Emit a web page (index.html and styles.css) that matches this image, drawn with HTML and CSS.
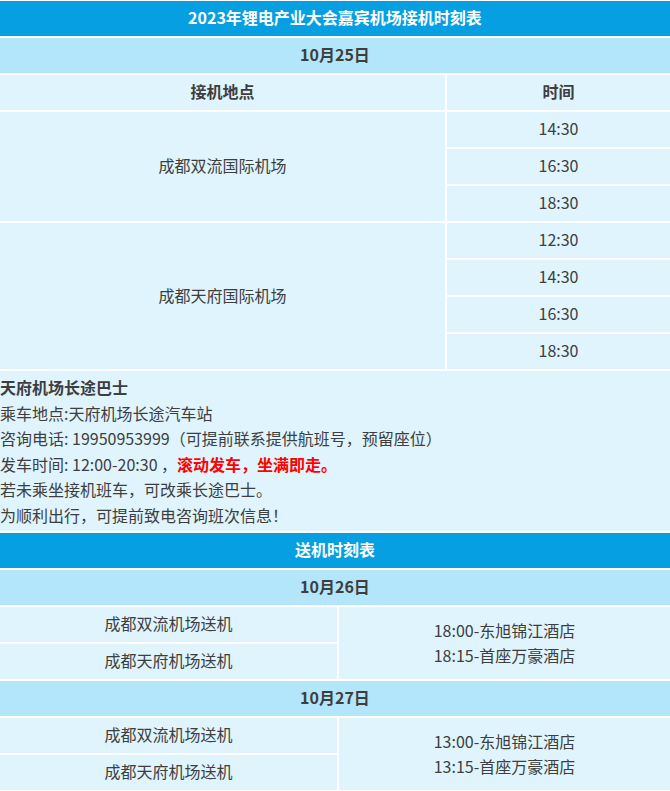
FILE: index.html
```html
<!DOCTYPE html>
<html lang="zh-CN">
<head>
<meta charset="utf-8">
<title>2023年锂电产业大会嘉宾机场接机时刻表</title>
<link rel="stylesheet" href="styles.css">
</head>
<body>
<div class="page">
  <div class="bar title">2023年锂电产业大会嘉宾机场接机时刻表</div>
  <div class="bar date">10月25日</div>
  <div class="grid pickup">
    <div class="cell head">接机地点</div>
    <div class="cell head">时间</div>
    <div class="cell place span3">成都双流国际机场</div>
    <div class="cell">14:30</div>
    <div class="cell">16:30</div>
    <div class="cell">18:30</div>
    <div class="cell place span4">成都天府国际机场</div>
    <div class="cell">12:30</div>
    <div class="cell">14:30</div>
    <div class="cell">16:30</div>
    <div class="cell">18:30</div>
  </div>
  <div class="info">
    <p class="strong">天府机场长途巴士</p>
    <p>乘车地点:天府机场长途汽车站</p>
    <p>咨询电话: 19950953999（可提前联系提供航班号，预留座位）</p>
    <p>发车时间: 12:00-20:30 ，<span class="red">滚动发车，坐满即走。</span></p>
    <p>若未乘坐接机班车，可改乘长途巴士。</p>
    <p>为顺利出行，可提前致电咨询班次信息！</p>
  </div>
  <div class="bar title">送机时刻表</div>
  <div class="bar date">10月26日</div>
  <div class="grid dropoff">
    <div class="cell">成都双流机场送机</div>
    <div class="cell span2 hotels"><span>18:00-东旭锦江酒店</span><span>18:15-首座万豪酒店</span></div>
    <div class="cell">成都天府机场送机</div>
  </div>
  <div class="bar date">10月27日</div>
  <div class="grid dropoff">
    <div class="cell">成都双流机场送机</div>
    <div class="cell span2 hotels"><span>13:00-东旭锦江酒店</span><span>13:15-首座万豪酒店</span></div>
    <div class="cell">成都天府机场送机</div>
  </div>
</div>
</body>
</html>
```

FILE: styles.css
```css
html, body {
  margin: 0;
  padding: 0;
  background: #ffffff;
}
.page {
  width: 670px;
  padding-top: 1px;
  display: flex;
  flex-direction: column;
  gap: 2px;
  font-family: "Noto Sans CJK SC", "Noto Sans", sans-serif;
  font-size: 16px;
  color: #3e3e3e;
}
.bar {
  height: 35px;
  box-sizing: border-box;
  padding-bottom: 3px;
  display: flex;
  align-items: center;
  justify-content: center;
  font-weight: bold;
}
.title {
  background: #069fe2;
  color: #ffffff;
}
.date {
  background: #b3e5fb;
}
.grid {
  display: grid;
  gap: 2px;
  grid-auto-rows: 35px;
}
.pickup {
  grid-template-columns: 445px 223px;
}
.dropoff {
  grid-template-columns: 337px 331px;
}
.cell {
  background: #dff4fd;
  padding-bottom: 3px;
  display: flex;
  align-items: center;
  justify-content: center;
}
.head {
  font-weight: bold;
}
.span3 {
  grid-row: span 3;
}
.span4 {
  grid-row: span 4;
}
.dropoff .cell:first-child {
  grid-column: 1;
  grid-row: 1;
}
.dropoff .cell:last-child {
  grid-column: 1;
  grid-row: 2;
}
.span2 {
  grid-column: 2;
  grid-row: 1 / span 2;
}
.hotels {
  flex-direction: column;
  line-height: 25px;
  padding-bottom: 1px;
}
.info {
  background: #dff4fd;
  padding: 4px 0 3px;
  line-height: 25.5px;
}
.info p {
  margin: 0;
}
.strong {
  font-weight: bold;
}
.red {
  color: #ff0000;
  font-weight: bold;
}
```
